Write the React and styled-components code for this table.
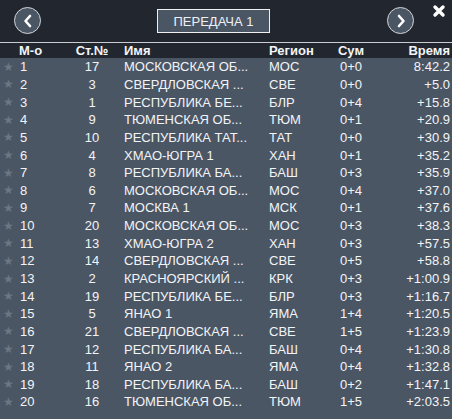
import React from 'react';
import styled, { createGlobalStyle } from 'styled-components';

const GlobalStyle = createGlobalStyle`
  html, body {
    margin: 0;
    padding: 0;
    background: #4b5665;
    font-family: "Liberation Sans", Arial, sans-serif;
  }
`;

const Page = styled.div`
  width: 452px;
  min-height: 419px;
  background: #4b5665;
  color: #f2f4f6;
  font-size: 13px;
`;

const TopBar = styled.div`
  height: 43px;
  background: #22272f;
  display: grid;
  grid-template-columns: 14px 27px 116px 113px 117px 27px 1fr;
  align-items: start;
  border-bottom: 1px solid #c9cdd2;
  box-sizing: border-box;
`;

const RoundButton = styled.div`
  grid-column: ${p => p.col};
  margin-top: 7px;
  width: 27px;
  height: 27px;
  box-sizing: border-box;
  border-radius: 50%;
  border: 1.5px solid #d3d6da;
  background: #4b5665;
  display: flex;
  align-items: center;
  justify-content: center;
`;

const Title = styled.div`
  grid-column: 4;
  margin-top: 9px;
  height: 24px;
  box-sizing: border-box;
  border: 1px solid #f0f0f0;
  background: #4b5665;
  display: flex;
  align-items: center;
  justify-content: center;
  font-size: 13px;
  color: #eef0f3;
`;

const Close = styled.div`
  grid-column: 7;
  margin-top: 4px;
  margin-left: 18px;
  color: #ffffff;
`;

const Row = styled.div`
  display: grid;
  grid-template-columns: 18px 52px 44px 155px 61px 42px 1fr;
  align-items: center;
  height: ${p => (p.head ? '15px' : '17.65px')};
  background: ${p => (p.head ? '#22272f' : 'transparent')};
  font-weight: ${p => (p.head ? 'bold' : 'normal')};
  white-space: nowrap;
`;

const Cell = styled.div`
  text-align: ${p => p.align || 'left'};
  padding-left: ${p => p.pl || 0}px;
  padding-right: ${p => p.pr || 0}px;
  overflow: hidden;
  grid-column: ${p => p.span || 'auto'};
`;

const Star = styled.div`
  color: #6c7785;
  font-family: "DejaVu Sans", sans-serif;
  font-size: 12px;
  padding-left: 3px;
  line-height: 1;
`;

const Body = styled.div`
  padding-top: 0;
`;

const rows = [
  [1, 17, 'МОСКОВСКАЯ ОБ...', 'МОС', '0+0', '8:42.2'],
  [2, 3, 'СВЕРДЛОВСКАЯ ...', 'СВЕ', '0+0', '+5.0'],
  [3, 1, 'РЕСПУБЛИКА БЕ...', 'БЛР', '0+4', '+15.8'],
  [4, 9, 'ТЮМЕНСКАЯ ОБ...', 'ТЮМ', '0+1', '+20.9'],
  [5, 10, 'РЕСПУБЛИКА ТАТ...', 'ТАТ', '0+0', '+30.9'],
  [6, 4, 'ХМАО-ЮГРА 1', 'ХАН', '0+1', '+35.2'],
  [7, 8, 'РЕСПУБЛИКА БА...', 'БАШ', '0+3', '+35.9'],
  [8, 6, 'МОСКОВСКАЯ ОБ...', 'МОС', '0+4', '+37.0'],
  [9, 7, 'МОСКВА 1', 'МСК', '0+1', '+37.6'],
  [10, 20, 'МОСКОВСКАЯ ОБ...', 'МОС', '0+3', '+38.3'],
  [11, 13, 'ХМАО-ЮГРА 2', 'ХАН', '0+3', '+57.5'],
  [12, 14, 'СВЕРДЛОВСКАЯ ...', 'СВЕ', '0+5', '+58.8'],
  [13, 2, 'КРАСНОЯРСКИЙ ...', 'КРК', '0+3', '+1:00.9'],
  [14, 19, 'РЕСПУБЛИКА БЕ...', 'БЛР', '0+3', '+1:16.7'],
  [15, 5, 'ЯНАО 1', 'ЯМА', '1+4', '+1:20.5'],
  [16, 21, 'СВЕРДЛОВСКАЯ ...', 'СВЕ', '1+5', '+1:23.9'],
  [17, 12, 'РЕСПУБЛИКА БА...', 'БАШ', '0+4', '+1:30.8'],
  [18, 11, 'ЯНАО 2', 'ЯМА', '0+4', '+1:32.8'],
  [19, 18, 'РЕСПУБЛИКА БА...', 'БАШ', '0+2', '+1:47.1'],
  [20, 16, 'ТЮМЕНСКАЯ ОБ...', 'ТЮМ', '1+5', '+2:03.5'],
];

function Chevron({ dir }) {
  const d = dir === 'left' ? 'M9 3 L4.5 8 L9 13' : 'M5 3 L9.5 8 L5 13';
  return (
    <svg width="14" height="16" viewBox="0 0 14 16">
      <path d={d} fill="none" stroke="#ffffff" strokeWidth="2.6" strokeLinecap="round" strokeLinejoin="round" />
    </svg>
  );
}

function App() {
  return (
    <Page>
      <GlobalStyle />
      <TopBar>
        <RoundButton col={2}>
          <Chevron dir="left" />
        </RoundButton>
        <Title>ПЕРЕДАЧА 1</Title>
        <RoundButton col={6}>
          <Chevron dir="right" />
        </RoundButton>
        <Close>
          <svg width="14" height="14" viewBox="0 0 14 14">
            <path d="M3 3 L11 11 M11 3 L3 11" stroke="#ffffff" strokeWidth="3.4" strokeLinecap="round" />
          </svg>
        </Close>
      </TopBar>

      <Row head>
        <Cell span="1 / 3" pl={19}>М-о</Cell>
        <Cell align="center">Ст.№</Cell>
        <Cell pl={10}>Имя</Cell>
        <Cell>Регион</Cell>
        <Cell align="center">Сум</Cell>
        <Cell align="right" pr={2}>Время</Cell>
      </Row>

      <Body>
        {rows.map(r => (
          <Row key={r[0]}>
            <Star>★</Star>
            <Cell pl={2}>{r[0]}</Cell>
            <Cell align="center">{r[1]}</Cell>
            <Cell pl={10}>{r[2]}</Cell>
            <Cell>{r[3]}</Cell>
            <Cell align="center">{r[4]}</Cell>
            <Cell align="right" pr={2}>{r[5]}</Cell>
          </Row>
        ))}
      </Body>
    </Page>
  );
}

export default App;
